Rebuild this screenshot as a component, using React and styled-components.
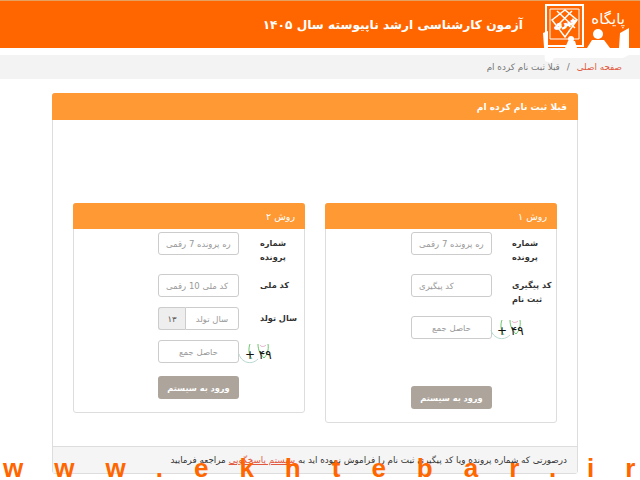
import React from 'react';
import styled, { createGlobalStyle } from 'styled-components';

const Global = createGlobalStyle`
  html, body { margin: 0; padding: 0; background: #fff; height: 480px; overflow: hidden; }
  body { font-family: "DejaVu Sans", "Noto Sans", sans-serif; font-size: 9px; color: #333; }
  * { box-sizing: border-box; }
`;

const Page = styled.div`
  position: relative;
  width: 640px;
  height: 480px;
  overflow: hidden;
`;

const Header = styled.header`
  height: 48px;
  background: #ff6600;
  border-top: 1px solid #e6a060;
  padding-right: 117px;
  direction: rtl;
  display: flex;
  align-items: center;
  color: #fff;
  font-size: 12.2px;
  font-weight: 700;
`;

const Crumbs = styled.nav`
  margin-top: 7px;
  height: 24px;
  background: #f3f3f3;
  padding-right: 18px;
  direction: rtl;
  display: flex;
  align-items: center;
  gap: 7px;
  font-size: 8.8px;
  color: #777;
`;

const CrumbLink = styled.a`
  color: #e2583e;
`;

const Outer = styled.section`
  margin: 14px 62px 0 52px;
  border: 1px solid #ddd;
  border-radius: 3px;
  background: #fff;
  height: 381px;
  display: flex;
  flex-direction: column;
`;

const OuterTitle = styled.h2`
  margin: -1px -1px 0;
  height: 27px;
  background: #ff9933;
  border-radius: 3px 3px 0 0;
  direction: rtl;
  display: flex;
  align-items: center;
  padding: 0 11px;
  color: #fff;
  font-size: 9.1px;
  font-weight: 700;
`;

const OuterBody = styled.div`
  flex: 1;
  padding: 83px 20px 0;
  display: flex;
  flex-direction: row-reverse;
  align-items: flex-start;
  gap: 20px;
`;

const Card = styled.div`
  width: 232px;
  height: ${p => p.$h}px;
  border: 1px solid #ddd;
  border-radius: 3px;
`;

const CardTitle = styled.h3`
  margin: -1px -1px 0;
  height: 26px;
  background: #ff9933;
  border-radius: 3px 3px 0 0;
  direction: rtl;
  display: flex;
  align-items: center;
  padding: 0 10px;
  color: #fff;
  font-size: 9.5px;
  font-weight: 400;
`;

const CardBody = styled.div`
  padding: 3px 4px 0 ${p => p.$pad}px;
`;

const Row = styled.div`
  display: grid;
  grid-template-columns: 81px 40px;
  justify-content: space-between;
  margin-bottom: ${p => p.$gap || 10}px;
`;

const Label = styled.label`
  padding-top: 4px;
  font-size: 8.2px;
  font-weight: 700;
  line-height: 14px;
  color: #333;
  text-align: left;
`;

const Field = styled.input`
  display: block;
  width: ${p => p.$w || 81}px;
  height: 23px;
  border: 1px solid #ccc;
  border-radius: ${p => (p.$joined ? '0 3px 3px 0' : '3px')};
  padding: 0 7px;
  font: 400 8.5px "DejaVu Sans", sans-serif;
  text-align: ${p => (p.$center ? 'center' : 'left')};
  background: #fff;
  outline: 0;
  &::placeholder { color: #999; opacity: 1; }
`;

const Group = styled.div`
  display: flex;
  width: 81px;
`;

const Addon = styled.span`
  width: 27px;
  height: 23px;
  background: #eee;
  border: 1px solid #ccc;
  border-right: 0;
  border-radius: 3px 0 0 3px;
  display: flex;
  align-items: center;
  justify-content: center;
  font-size: 8.5px;
  color: #555;
`;

const Submit = styled.button`
  display: block;
  width: 81px;
  height: 23px;
  border: 0;
  border-radius: 3px;
  background: #ada59c;
  color: #fff;
  font: 700 8.2px "DejaVu Sans", sans-serif;
  direction: rtl;
  padding: 0;
`;

const CaptchaBox = styled.div`
  position: relative;
  margin: 4px 0 0 -21px;
  width: 40px;
  height: 19px;
  svg { display: block; overflow: visible; }
`;

const CaptchaText = styled.span`
  position: absolute;
  left: 6px;
  top: 4px;
  font: 400 12px "DejaVu Sans", sans-serif;
  color: #111;
  white-space: nowrap;
  direction: ltr;
`;

const Footer = styled.div`
  height: 27px;
  background: #f5f5f5;
  border-top: 1px solid #ddd;
  direction: rtl;
  display: flex;
  align-items: center;
  padding: 0 10px;
  font-size: 8.8px;
  color: #333;
  white-space: nowrap;
`;

const FootLink = styled.a`
  color: #e2583e;
  text-decoration: underline;
`;

const Watermark = styled.div`
  position: absolute;
  left: 3px;
  bottom: -3px;
  font: 700 26px "Liberation Sans", Arial, sans-serif;
  letter-spacing: 31px;
  color: #ff6600;
  white-space: nowrap;
  line-height: 30px;
`;

const LogoWrap = styled.div`
  position: absolute;
  top: 0;
  left: 535px;
  width: 105px;
  height: 70px;
`;

const Logo = () => (
  <svg width="105" height="70" viewBox="0 0 105 70">
    <path d="M10 4h39v43H10z M12 6v39h35V6z" fill="#fff" fillRule="evenodd" />
    <path d="M15 9h29v30H15z" fill="none" stroke="#fff" strokeWidth="1" />
    <path d="M17 20L30 10l12 10-12 17z M22 11l18 17 M37 11L20 28" fill="none" stroke="#fff" strokeWidth="1.5" />
    <text x="30" y="26" textAnchor="middle" transform="rotate(-15 30 22)" fontFamily="DejaVu Sans" fontSize="9" fontWeight="700" fill="#fff" stroke="#fff" strokeWidth="1" direction="rtl">خبری</text>
    <text x="90" y="24" fontFamily="DejaVu Sans" fontSize="15" fill="#fff" direction="rtl" textAnchor="start">پایگاه</text>
    <circle cx="63" cy="34" r="5" fill="#fff" />
    <circle cx="36" cy="39" r="3" fill="#fff" />
    <path d="M8 33l5-2v17h17l3-7h7l2 7h10l5-8h12l6 8h9l1-15 9-5v27l-6 3H19l-3 5-6-2z" fill="#fff" />
  </svg>
);

const Captcha = () => (
  <CaptchaBox>
    <svg width="40" height="19" viewBox="0 0 40 19">
      <path d="M0 10c2 8 12 12 19 5" fill="none" stroke="#b5d8d0" strokeWidth="1" />
      <path d="M11 0c-2 5-1 11 2 15M19 0c0 6 2 10 6 14 3-3 5-8 4-14" fill="none" stroke="#6cc66c" strokeWidth="1" />
      <path d="M21 1c1 2 4 2 6 0" fill="none" stroke="#e6a8c8" strokeWidth="1" />
    </svg>
    <CaptchaText>+ ۴۹</CaptchaText>
  </CaptchaBox>
);

const App = () => (
  <Page>
    <Global />
    <Header>آزمون کارشناسی ارشد ناپیوسته سال ۱۴۰۵</Header>
    <Crumbs>
      <CrumbLink>صفحه اصلی</CrumbLink>
      <span>/</span>
      <span>قبلا ثبت نام کرده ام</span>
    </Crumbs>
    <Outer>
      <OuterTitle>قبلا ثبت نام کرده ام</OuterTitle>
      <OuterBody>
        <Card $h={220}>
          <CardTitle>روش ۱</CardTitle>
          <CardBody $pad={85}>
            <Row>
              <Field placeholder="شماره پرونده 7 رقمی" />
              <Label>شماره پرونده</Label>
            </Row>
            <Row>
              <Field placeholder="کد پیگیری" />
              <Label>کد&nbsp;پیگیری ثبت نام</Label>
            </Row>
            <Row $gap={47}>
              <Field placeholder="حاصل جمع" $center />
              <Captcha />
            </Row>
            <Submit>ورود به سیستم</Submit>
          </CardBody>
        </Card>
        <Card $h={210}>
          <CardTitle>روش ۲</CardTitle>
          <CardBody $pad={84}>
            <Row>
              <Field placeholder="شماره پرونده 7 رقمی" />
              <Label>شماره پرونده</Label>
            </Row>
            <Row>
              <Field placeholder="کد ملی 10 رقمی" />
              <Label>کد ملی</Label>
            </Row>
            <Row>
              <Group>
                <Addon>۱۳</Addon>
                <Field placeholder="سال تولد" $w={54} $joined $center />
              </Group>
              <Label>سال تولد</Label>
            </Row>
            <Row $gap={13}>
              <Field placeholder="حاصل جمع" $center />
              <Captcha />
            </Row>
            <Submit>ورود به سیستم</Submit>
          </CardBody>
        </Card>
      </OuterBody>
      <Footer>
        درصورتی که شماره پرونده ویا کد پیگیری ثبت نام را فراموش نموده اید به&nbsp;
        <FootLink>سیستم پاسخگویی</FootLink>
        &nbsp;مراجعه فرمایید
      </Footer>
    </Outer>
    <LogoWrap><Logo /></LogoWrap>
    <Watermark>www.ekhtebar.ir</Watermark>
  </Page>
);

export default App;
